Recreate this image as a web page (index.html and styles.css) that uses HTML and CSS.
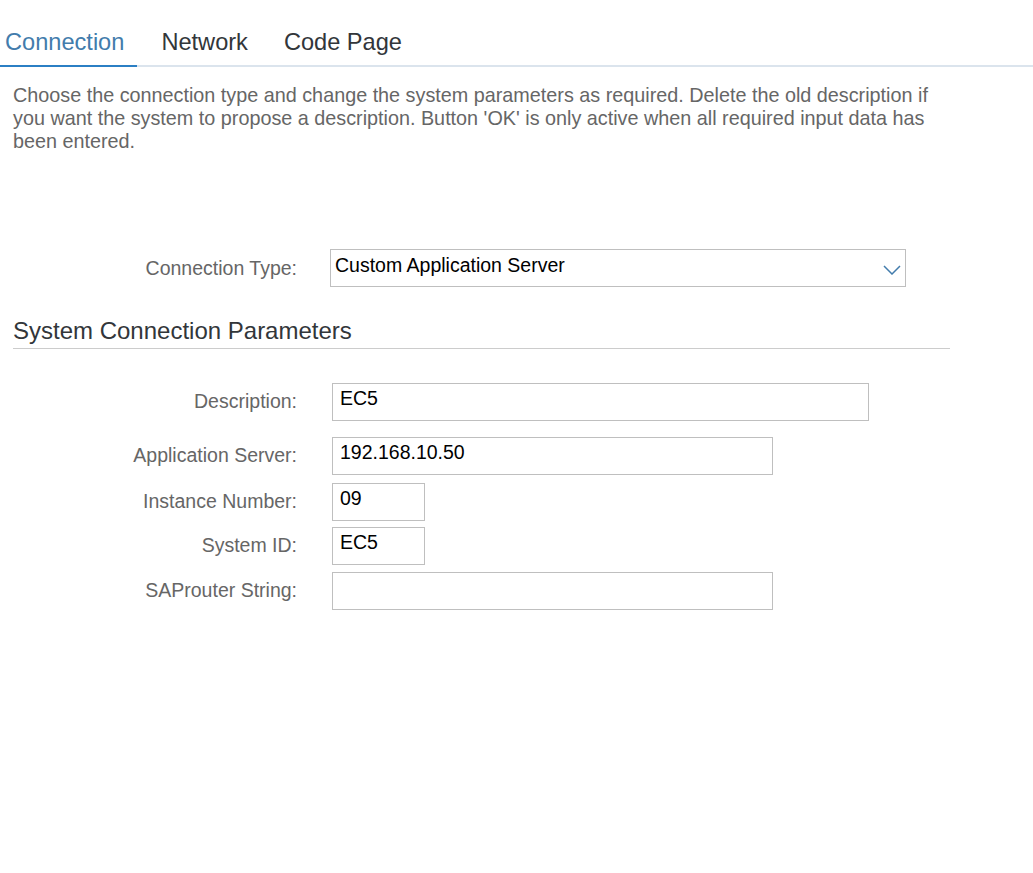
FILE: index.html
```html
<!DOCTYPE html>
<html lang="en">
<head>
<meta charset="utf-8">
<title>Connection</title>
<link rel="stylesheet" href="styles.css">
</head>
<body>
<nav class="tabs">
  <div class="tab tab-active">Connection</div>
  <div class="tab">Network</div>
  <div class="tab">Code Page</div>
</nav>
<main class="content">
  <p class="intro">Choose the connection type and change the system parameters as required. Delete the old description if you want the system to propose a description. Button 'OK' is only active when all required input data has been entered.</p>

  <div class="row row-type">
    <label class="label">Connection Type:</label>
    <div class="select">
      <span>Custom Application Server</span>
      <svg class="chevron" width="18" height="10" viewBox="0 0 18 10"><polyline points="1,1 9,9 17,1" fill="none" stroke="#427cac" stroke-width="1.5"/></svg>
    </div>
  </div>

  <h2 class="section-title">System Connection Parameters</h2>

  <div class="form">
    <div class="row row-desc">
      <label class="label">Description:</label>
      <div class="field field-xl">EC5</div>
    </div>
    <div class="row row-app">
      <label class="label">Application Server:</label>
      <div class="field field-l">192.168.10.50</div>
    </div>
    <div class="row row-inst">
      <label class="label">Instance Number:</label>
      <div class="field field-s">09</div>
    </div>
    <div class="row">
      <label class="label">System ID:</label>
      <div class="field field-s">EC5</div>
    </div>
    <div class="row">
      <label class="label">SAProuter String:</label>
      <div class="field field-l"></div>
    </div>
  </div>
</main>
</body>
</html>
```

FILE: styles.css
```css
html, body {
  margin: 0;
  padding: 0;
  background: #ffffff;
  font-family: "Liberation Sans", Arial, sans-serif;
}

.tabs {
  display: flex;
  gap: 12px;
  border-bottom: 2px solid #dbe4ed;
  padding-top: 29px;
}

.tab {
  font-size: 23.6px;
  line-height: 27px;
  color: #32363a;
  padding: 0 12px 9px 12px;
}

.tab-active {
  color: #427cac;
  padding-left: 5px;
  padding-right: 13px;
  border-bottom: 2px solid #2b7fc4;
  margin-bottom: -2px;
}

.content {
  padding: 0 13px;
}

.intro {
  margin: 17px 0 0 0;
  max-width: 925px;
  font-size: 19.8px;
  line-height: 23px;
  color: #666666;
}

.row {
  display: flex;
  align-items: center;
  margin-bottom: 7px;
}

.label {
  width: 284px;
  text-align: right;
  font-size: 19.5px;
  color: #666666;
  margin-right: 35px;
  margin-top: -2px;
}

.row-type {
  margin-top: 96px;
  margin-bottom: 0;
}

.row-type .label {
  margin-right: 33px;
  margin-top: 0;
}

.select {
  width: 576px;
  height: 38px;
  box-sizing: border-box;
  border: 1px solid #bfbfbf;
  display: flex;
  justify-content: space-between;
  align-items: flex-start;
  padding: 4px 4px 0 4px;
  font-size: 19.5px;
  color: #000000;
}

.chevron {
  margin-top: 11px;
}

.section-title {
  margin: 30px 0 0 0;
  width: 937px;
  font-size: 24px;
  font-weight: normal;
  line-height: 28px;
  color: #32363a;
  padding-bottom: 3px;
  border-bottom: 1px solid #cccccc;
}

.form {
  margin-top: 34px;
}

.row-desc {
  margin-bottom: 16px;
}

.row-app {
  margin-bottom: 8px;
}

.row-inst {
  margin-bottom: 6px;
}

.field {
  height: 38px;
  box-sizing: border-box;
  border: 1px solid #bfbfbf;
  padding: 3px 7px 0 7px;
  font-size: 19.5px;
  color: #000000;
}

.field-xl { width: 537px; }
.field-l { width: 441px; }
.field-s { width: 93px; }
```
